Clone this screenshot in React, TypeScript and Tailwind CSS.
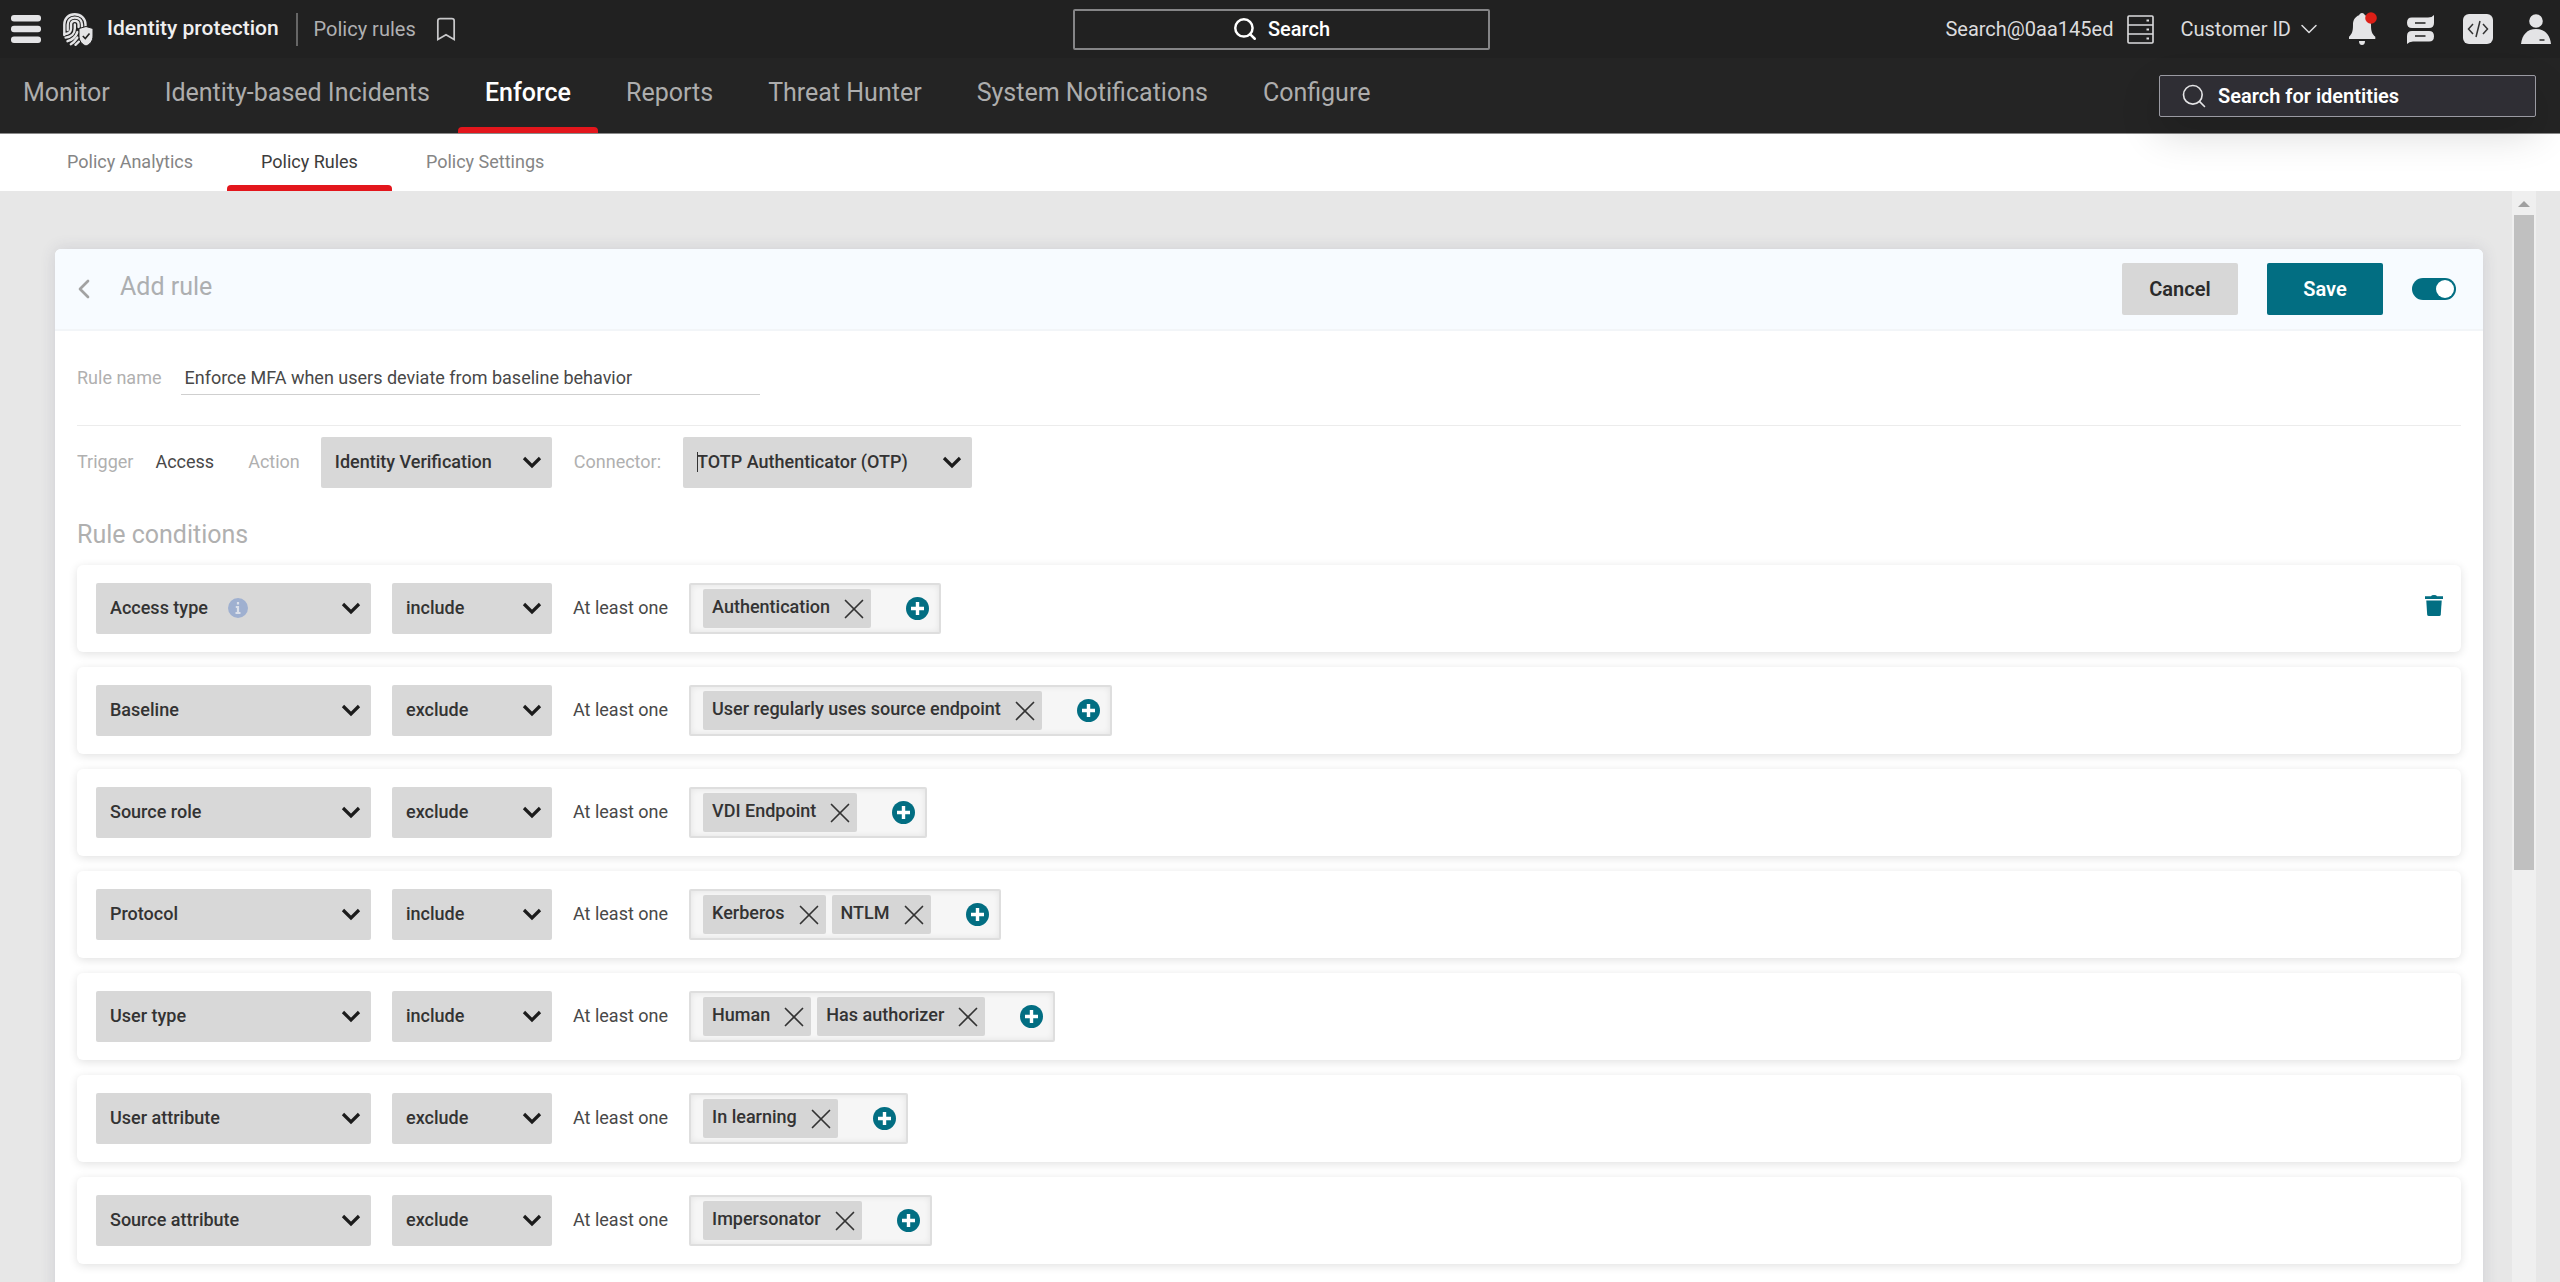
import { Bookmark, ChevronDown, ChevronLeft, Search, X } from "lucide-react"

type Condition = {
  field: string
  mode: "include" | "exclude"
  values: string[]
  info?: boolean
  removable?: boolean
}

const mainTabs = [
  "Monitor",
  "Identity-based Incidents",
  "Enforce",
  "Reports",
  "Threat Hunter",
  "System Notifications",
  "Configure",
]

const subTabs = ["Policy Analytics", "Policy Rules", "Policy Settings"]

const conditions: Condition[] = [
  { field: "Access type", mode: "include", values: ["Authentication"], info: true, removable: true },
  { field: "Baseline", mode: "exclude", values: ["User regularly uses source endpoint"] },
  { field: "Source role", mode: "exclude", values: ["VDI Endpoint"] },
  { field: "Protocol", mode: "include", values: ["Kerberos", "NTLM"] },
  { field: "User type", mode: "include", values: ["Human", "Has authorizer"] },
  { field: "User attribute", mode: "exclude", values: ["In learning"] },
  { field: "Source attribute", mode: "exclude", values: ["Impersonator"] },
]

function MenuIcon() {
  return (
    <svg width="30" height="28" viewBox="0 0 30 28" fill="#e4e4e6">
      <rect width="30" height="6.500" rx="3" />
      <rect y="10.700" width="30" height="6.500" rx="3" />
      <rect y="21.500" width="30" height="6.500" rx="3" />
    </svg>
  )
}

function FingerprintIcon() {
  return (
    <svg width="30" height="33" viewBox="0 0 30 33" fill="none">
      <g stroke="#e4e4e6" strokeWidth="2.400" strokeLinecap="round">
        <path d="M1.300 22V11.500C1.300 5.500 5.500 1.300 11.700 1.300S22.500 5.500 22.500 11.500V13" />
        <path d="M4.700 17V11.800C4.700 7.300 7.500 4.600 11.800 4.600S19 7.500 19 11.800V14" />
        <path d="M1.600 21C6 21 8 18.500 8 15.500V11.800C8 9.300 9.500 7.900 11.800 7.900S15.600 9.500 15.600 11.800V14" />
        <path d="M11.800 11.500V15.500C11.800 20.500 8.300 24 2.600 24.600" />
        <path d="M14.500 19C12.600 24 9 27 4.500 28.200" />
        <path d="M14.500 24.500C12.500 27.500 10.500 29.800 7.800 31.200" />
        <path d="M16 28.500L12.500 31.800" />
      </g>
      <path d="M23 13.500L30 15.500V23C30 28 27 31.500 23 33C19 31.500 16 28 16 23V15.500Z" fill="#e4e4e6" stroke="#212121" strokeWidth="1" />
      <path d="M19.800 23L22.300 25.500L26.500 20.500" stroke="#212121" strokeWidth="1.600" />
    </svg>
  )
}

function ServerIcon() {
  return (
    <svg width="27" height="29" viewBox="0 0 27 29" fill="none" stroke="#dcdcde" strokeWidth="1.600">
      <rect x="1" y="1" width="25" height="27" rx="1" />
      <path d="M1 10H26M1 19H26" />
      <path d="M19.500 5.500H22M19.500 14.500H22M19.500 23.500H22" strokeWidth="2" />
    </svg>
  )
}

function BellIcon() {
  return (
    <svg width="29" height="34" viewBox="0 0 29 34" fill="#e4e4e6">
      <path d="M13 1c1.500 0 2.600 1 2.900 2.300 4 1.300 6.100 5 6.100 9.500 0 7 1 9 4.300 12V27H0v-2.200c3-3 4-5 4-12 0-4.500 2.100-8.200 6.100-9.500C10.400 2 11.500 1 13 1z" />
      <path d="M10 29h6q0 4-3 4t-3-4z" />
      <circle cx="22" cy="6" r="5.800" fill="#dc1f17" />
    </svg>
  )
}

function MessagesIcon() {
  return (
    <svg width="27" height="29" viewBox="0 0 27 29" fill="#e4e4e6">
      <path d="M27 0v8q0 5-5 5H5q-5 0-5-5.300T5 2.500h16q4 0 6-2.500z" />
      <path d="M0 29v-8q0-5 5-5h17q5 0 5 5.300t-5 5.200H6q-4 0-6 2.500z" />
      <path d="M8 8H18.500M8 21H18.500" stroke="#212121" strokeWidth="1.600" />
    </svg>
  )
}

function CodeIcon() {
  return (
    <svg width="30" height="30" viewBox="0 0 30 30" fill="none">
      <rect width="30" height="30" rx="6" fill="#e4e4e6" />
      <path d="M10 10L5.500 15L10 20M20 10L24.500 15L20 20M17 7L13 23" stroke="#333" strokeWidth="1.500" />
    </svg>
  )
}

function UserIcon() {
  return (
    <svg width="30" height="30" viewBox="0 0 30 30" fill="#e4e4e6">
      <circle cx="15" cy="7" r="6.800" />
      <path d="M0 30c1-9 6-15 15-15s14 6 15 15z" />
      <path d="M18.500 26H23.500" stroke="#333" strokeWidth="1.600" />
    </svg>
  )
}

function PlusIcon() {
  return (
    <svg width="23" height="23" viewBox="0 0 23 23">
      <circle cx="11.500" cy="11.500" r="11.500" fill="#026e82" />
      <path d="M11.500 5V18M5 11.500H18" stroke="#fff" strokeWidth="3.400" />
    </svg>
  )
}

function TrashIcon() {
  return (
    <svg width="18" height="21" viewBox="0 0 18 21" fill="#026e82">
      <path d="M6 1.300Q6.500 0 9 0T12 1.300H18V4H0V1.300Z" />
      <path d="M1.300 5.500H16.700L15.800 19.500Q15.700 21 14.200 21H3.800Q2.300 21 2.200 19.500Z" />
    </svg>
  )
}

function InfoIcon() {
  return (
    <svg width="20" height="20" viewBox="0 0 20 20">
      <circle cx="10" cy="10" r="10" fill="#9fb0d0" />
      <path d="M10 4V6.600M7.800 9H10V15M7.500 15H12.500" fill="none" stroke="#dbe0ea" strokeWidth="2.200" />
    </svg>
  )
}

function SelectBox({ id, label, value, className }: { id: string; label: string; value: string; className: string }) {
  return (
    <div className={`relative shrink-0 ${className}`}>
      <select
        id={id}
        aria-label={label}
        defaultValue={value}
        className="block h-[51px] w-full appearance-none rounded-xs bg-[#d8d8d8] px-[14px] pb-[2px] text-[18px] font-medium text-[#333]"
      >
        <option>{value}</option>
      </select>
      <ChevronDown
        className="pointer-events-none absolute right-1 top-[9px] text-[#1c1c1c]"
        size={32}
        strokeWidth={2.4}
        strokeLinecap="butt"
        strokeLinejoin="miter"
      />
    </div>
  )
}

function Chip({ text }: { text: string }) {
  return (
    <span className="flex h-[39px] items-center gap-[7px] rounded-xs bg-[#d6d6d6] pl-[9px] text-[18px] font-medium whitespace-nowrap text-[#333]">
      <span className="pb-1">{text}</span>
      <button aria-label={`Remove ${text}`}>
        <X size={34} strokeWidth={1.2} />
      </button>
    </span>
  )
}

function ConditionRow({ condition, index }: { condition: Condition; index: number }) {
  return (
    <div className="flex h-[87px] items-center gap-[21px] rounded-md bg-white pl-[19px] pr-[18px] shadow-[0_2px_10px_rgba(0,0,0,0.12)]">
      <div className="relative">
        <SelectBox id={`field-${index}`} label="Condition" value={condition.field} className="w-[275px]" />
        {condition.info && (
          <span className="absolute left-[132px] top-[15px]">
            <InfoIcon />
          </span>
        )}
      </div>
      <SelectBox id={`mode-${index}`} label="Mode" value={condition.mode} className="w-[160px]" />
      <span className="pb-[2px] whitespace-nowrap">At least one</span>
      <div className="flex h-[51px] items-center gap-[6px] rounded-xs border-2 border-[#dedede] bg-[#f6f6f6] pl-3 pr-[10px] shadow-[inset_0_0_6px_rgba(0,0,0,0.08)]">
        {condition.values.map((v) => (
          <Chip key={v} text={v} />
        ))}
        <button className="ml-[29px]" aria-label="Add value">
          <PlusIcon />
        </button>
      </div>
      {condition.removable && (
        <button className="ml-auto pb-[6px]" aria-label="Delete condition">
          <TrashIcon />
        </button>
      )}
    </div>
  )
}

function TopBar() {
  return (
    <div className="grid h-[58px] grid-cols-[1fr_auto_1fr] items-center bg-[#212121] pl-[11px] pr-[9px] text-[20px]">
      <div className="flex items-center whitespace-nowrap">
        <button aria-label="Menu">
          <MenuIcon />
        </button>
        <span className="ml-[22px]">
          <FingerprintIcon />
        </span>
        <span className="ml-[14px] text-[21px] font-medium text-[#efeff0]">Identity protection</span>
        <span className="ml-[17px] h-[33px] w-[2px] bg-[#666]" />
        <span className="ml-4 text-[#b0b0b2]">Policy rules</span>
        <button className="ml-4" aria-label="Bookmark">
          <Bookmark className="text-[#c8c8ca]" size={28} strokeWidth={1.5} strokeLinejoin="miter" />
        </button>
      </div>
      <button className="flex h-[41px] w-[417px] items-center justify-center gap-[10px] rounded-xs border-2 border-[#858587] font-medium text-white">
        <Search size={26} strokeWidth={2.3} />
        Search
      </button>
      <div className="flex items-center justify-end whitespace-nowrap text-[#dcdcde]">
        <span>Search@0aa145ed</span>
        <button className="ml-[14px]" aria-label="Servers">
          <ServerIcon />
        </button>
        <button className="ml-[26px] flex items-center gap-1">
          Customer ID
          <ChevronDown size={28} strokeWidth={1.3} />
        </button>
        <button className="ml-[26px]" aria-label="Notifications">
          <BellIcon />
        </button>
        <button className="ml-[29px]" aria-label="Messages">
          <MessagesIcon />
        </button>
        <button className="ml-[29px]" aria-label="API">
          <CodeIcon />
        </button>
        <button className="ml-7" aria-label="Account">
          <UserIcon />
        </button>
      </div>
    </div>
  )
}

function MainNav() {
  return (
    <div className="flex h-[76px] items-center justify-between border-b border-[#8a8a8a] bg-[#242424] pr-6">
      <nav className="flex h-full gap-px">
        {mainTabs.map((tab) => {
          const active = tab === "Enforce"
          return (
            <a
              key={tab}
              href="#"
              className={`flex flex-col px-[27px] text-[25px] whitespace-nowrap first:pl-[23px] ${
                active ? "font-medium text-white" : "text-[#adadad]"
              }`}
            >
              <span className="flex flex-1 items-center">{tab}</span>
              <span className={`-mx-[27px] h-[6px] rounded-t-sm ${active ? "bg-[#e3161c]" : ""}`} />
            </a>
          )
        })}
      </nav>
      <label className="relative z-10 flex h-[42px] w-[377px] items-center gap-[10px] rounded-xs border border-[#9a9aa2] bg-[#2f2e34] pl-5 shadow-[0_16px_40px_rgba(0,0,0,0.16)]">
        <Search className="shrink-0 text-[#e4e4e6]" size={28} strokeWidth={1.4} />
        <input
          aria-label="Search for identities"
          placeholder="Search for identities"
          className="w-full bg-transparent text-[20px] font-semibold text-white outline-none placeholder:text-white"
        />
      </label>
    </div>
  )
}

function SubNav() {
  return (
    <nav className="flex h-[57px] shrink-0 bg-white pl-[33px]">
      {subTabs.map((tab) => {
        const active = tab === "Policy Rules"
        return (
          <a
            key={tab}
            href="#"
            className={`relative flex items-center px-[34px] pb-[2px] whitespace-nowrap ${active ? "text-[#3c3c3c]" : "text-[#858585]"}`}
          >
            {tab}
            {active && <span className="absolute inset-x-0 bottom-0 h-[6px] rounded-t-sm bg-[#e3161c]" />}
          </a>
        )
      })}
    </nav>
  )
}

function RuleCard() {
  return (
    <section className="min-w-0 flex-1 rounded-t-md bg-white shadow-[0_0_16px_rgba(60,60,90,0.14)]">
      <div className="flex h-[82px] items-center rounded-t-md border-b-2 border-[#f2f5f8] bg-[#f7fbff] pl-[13px] pr-[27px]">
        <button aria-label="Back">
          <ChevronLeft className="text-[#a2a2a2]" size={32} strokeWidth={2} />
        </button>
        <h1 className="pb-1 pl-5 text-[25px] text-[#adafb1]">Add rule</h1>
        <div className="ml-auto flex items-center gap-[29px]">
          <button className="h-[52px] w-[116px] rounded-xs bg-[#d7d7d7] text-[20px] font-semibold text-[#2b2b2b]">
            Cancel
          </button>
          <button className="h-[52px] w-[116px] rounded-xs bg-[#026e82] text-[20px] font-semibold text-white">
            Save
          </button>
          <input
            type="checkbox"
            defaultChecked
            aria-label="Rule enabled"
            className="flex h-[22px] w-11 appearance-none items-center rounded-full bg-[#9a9a9a] px-[2px] before:size-[18px] before:rounded-full before:bg-white checked:justify-end checked:bg-[#026e82]"
          />
        </div>
      </div>

      <div className="px-[22px] pb-12">
        <div className="flex h-[95px] items-center gap-5 border-b border-[#ececec]">
          <label htmlFor="rule-name" className="pb-[2px] text-[#b0b0b0]">
            Rule name
          </label>
          <input
            id="rule-name"
            defaultValue="Enforce MFA when users deviate from baseline behavior"
            className="h-[34px] w-[579px] border-b border-[#cfcfcf] bg-transparent pl-[3px] outline-none"
          />
        </div>

        <div className="flex items-center pt-[11px] whitespace-nowrap">
          <span className="pb-[2px] text-[#b0b0b0]">Trigger</span>
          <span className="ml-[22px] pb-[2px]">Access</span>
          <label htmlFor="action" className="ml-[34px] pb-[2px] text-[#b0b0b0]">
            Action
          </label>
          <SelectBox id="action" label="Action" value="Identity Verification" className="ml-[21px] w-[231px]" />
          <label htmlFor="connector" className="ml-[22px] pb-[2px] text-[#b0b0b0]">
            Connector:
          </label>
          <div className="relative ml-[22px]">
            <SelectBox id="connector" label="Connector" value="TOTP Authenticator (OTP)" className="w-[289px]" />
            <span className="absolute left-[14px] top-[15px] h-5 w-px bg-[#333]" />
          </div>
        </div>

        <h2 className="mt-8 mb-[15px] text-[25px] leading-[30px] text-[#b0b0b0]">Rule conditions</h2>
        <div className="flex flex-col gap-[15px]">
          {conditions.map((c, i) => (
            <ConditionRow key={c.field} condition={c} index={i} />
          ))}
        </div>
      </div>
    </section>
  )
}

export default function App() {
  return (
    <div className="flex h-screen flex-col overflow-hidden bg-[#e7e7e7] font-['Roboto',sans-serif] text-[18px] text-[#484848]">
      <header className="relative shrink-0">
        <TopBar />
        <MainNav />
      </header>
      <SubNav />
      <main className="flex min-h-0 flex-1 gap-[29px] pl-[55px] pr-6">
        <div className="min-w-0 flex-1 pt-[58px]">
          <RuleCard />
        </div>
        <div className="flex w-6 shrink-0 flex-col items-center bg-[#efefef]">
          <svg width="12" height="24" viewBox="0 0 12 24" fill="#a0a0a0" className="shrink-0">
            <path d="M0 16L6 10L12 16Z" />
          </svg>
          <div className="h-[60%] w-5 bg-[#c0c0c0]" />
        </div>
      </main>
    </div>
  )
}
